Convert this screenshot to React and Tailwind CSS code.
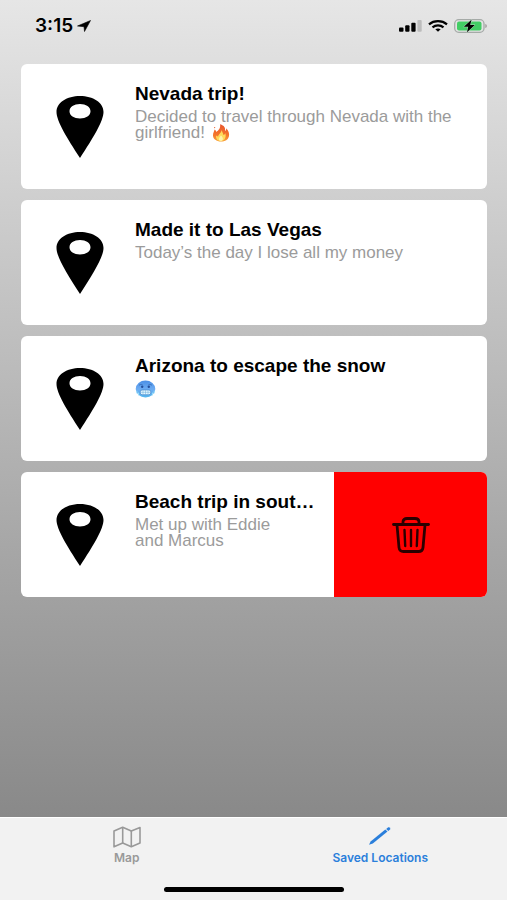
import { useState } from 'react';

const initialTrips = [
  {
    id: 1,
    title: 'Nevada trip!',
    description: 'Decided to travel through Nevada with the girlfriend!',
    emoji: 'fire',
  },
  { id: 2, title: 'Made it to Las Vegas', description: 'Today’s the day I lose all my money' },
  { id: 3, title: 'Arizona to escape the snow', description: '', emoji: 'cold' },
  {
    id: 4,
    title: 'Beach trip in sout…',
    description: 'Met up with Eddie and Marcus',
    swiped: true,
  },
];

function PinIcon() {
  return (
    <svg viewBox="0 0 48 62" className="h-[62px] w-12" aria-hidden="true">
      <path
        fillRule="evenodd"
        d="M24 0C37 0 47.500 6.500 47.500 16C47.500 25 37 42 24 62C11 42 .5 25 .5 16C.5 6.500 11 0 24 0ZM24 8C18 8 13.500 11 13.500 15.300C13.500 19.500 18 22.500 24 22.500C30 22.500 34.500 19.500 34.500 15.300C34.500 11 30 8 24 8Z"
      />
    </svg>
  );
}

function FireEmoji() {
  return (
    <svg viewBox="0 0 18 18" className="-mt-1 ml-0.5 inline-block size-[18px] align-text-bottom" role="img" aria-label="fire">
      <defs>
        <linearGradient id="flame" x1="0" y1="0" x2="0" y2="1">
          <stop offset="0" stopColor="#e8552d" />
          <stop offset="0.6" stopColor="#f4742a" />
          <stop offset="1" stopColor="#f9a13a" />
        </linearGradient>
      </defs>
      <path
        fill="url(#flame)"
        d="M8 .3C12.500 1.500 13.500 4 13 7C14.200 6.500 14.300 5 14.100 4.200C16.500 6.500 17.500 9 17 12C16.300 15.800 13 17.600 9 17.600C4.500 17.600 1 15.200 1 11.300C1 9 2.200 7.500 2.600 5.600C3.600 6.100 4 7 4.200 8C6.500 6.500 8.900 4 8 .3Z"
      />
      <path
        fill="#ffd95a"
        d="M9.500 6C10.500 8 11 9.500 11.500 11C12.600 10.700 13 10 13.100 9C14.700 12.500 13 17 9 17C5.500 17 3.600 14.800 4.200 11.500C5 12.200 5.500 12.500 6.200 12.600C6.300 10 9.500 9.200 9.500 6Z"
      />
      <path fill="#fff3a8" d="M9 11.500C11.500 13.500 11.500 16.700 9 16.900C6.300 16.700 6.300 14.500 9 11.500Z" />
      <circle cx="2.600" cy="3.600" r=".7" fill="#ee6a3a" />
    </svg>
  );
}

function ColdEmoji() {
  return (
    <svg viewBox="0 0 21 18" className="-mt-1 inline-block h-[18px] w-[21px] align-text-bottom" role="img" aria-label="cold face">
      <defs>
        <linearGradient id="cold" x1="0" y1="0" x2="0" y2="1">
          <stop offset="0" stopColor="#4a8fe6" />
          <stop offset="0.5" stopColor="#6cabf2" />
          <stop offset="1" stopColor="#55b7ee" />
        </linearGradient>
      </defs>
      <ellipse cx="10.500" cy="9" rx="9.800" ry="8.500" fill="url(#cold)" />
      <path d="M4 5.300C5 4.400 6.500 4.300 7.500 4.600M13.500 4.600C14.700 4.300 16 4.500 17 5.300" stroke="#3468b5" strokeWidth=".8" fill="none" />
      <ellipse cx="7.200" cy="6.800" rx="1.200" ry="1.300" fill="#244f9b" />
      <ellipse cx="13.800" cy="6.800" rx="1.200" ry="1.300" fill="#244f9b" />
      <rect x="5.300" y="10" width="10.400" height="4.700" rx="1.800" fill="#e4f8ff" stroke="#3c7cc4" strokeWidth=".6" />
      <path d="M5.500 12.300H15.500M8 10.200V14.500M10.500 10.200V14.500M13 10.200V14.500" stroke="#6aa9d9" strokeWidth=".5" />
      <path d="M1.800 11V13M3.500 13V15M17.500 13V15M19.200 11V13" stroke="#9fe2fb" strokeWidth=".9" strokeLinecap="round" />
    </svg>
  );
}

function TrashIcon() {
  return (
    <svg viewBox="0 0 38 36" className="h-9 w-[38px]" fill="none" stroke="#2b0000" strokeWidth="2.800" strokeLinecap="round" strokeLinejoin="round" aria-hidden="true">
      <path d="M1.500 7.500H36.500" />
      <path d="M11 7V4.800C11 2.500 12.500 1.500 15 1.500H23C25.500 1.500 27 2.500 27 4.800V7" />
      <path d="M5 8L7 30.500C7.300 33.300 8.500 34.500 11.500 34.500H26.500C29.500 34.500 30.700 33.300 31 30.500L33 8" />
      <path d="M12.500 13L13.200 29M19 13V29M25.500 13L24.800 29" strokeWidth="2.400" />
    </svg>
  );
}

function MapIcon() {
  return (
    <svg viewBox="0 0 28 22" className="h-[22px] w-7" fill="none" stroke="currentColor" strokeWidth="1.600" strokeLinejoin="round" aria-hidden="true">
      <path d="M1 5L9.700 1.200L18.300 5L27 1.500V17L18.300 20.800L9.700 17L1 20.800Z" />
      <path d="M9.700 1.200V17M18.300 5V20.800" />
    </svg>
  );
}

function PencilIcon() {
  return (
    <svg viewBox="0 0 28 22" className="h-[22px] w-7" aria-hidden="true">
      <path d="M3 18.700L4.600 15.500L19.300 3.600L21.500 5.500L6.800 17.500Z" fill="currentColor" />
      <path d="M20.200 3L22.200 1.300Q24.900 1 24.300 3.300L22.300 4.900Z" fill="currentColor" />
    </svg>
  );
}

function StatusBar() {
  return (
    <header className="flex h-16 items-start justify-between pt-4 pr-[19px] pl-[35px]">
      <div className="flex h-5 items-center gap-1">
        <span className="font-['Inter'] text-[19px] leading-5 font-semibold">3:15</span>
        <svg viewBox="0 0 14 12" className="h-3 w-3.5" aria-hidden="true">
          <path d="M13.500 .5L7.500 11.500L7 6.700L.5 6Z" stroke="#000" strokeWidth=".6" strokeLinejoin="round" />
        </svg>
      </div>
      <div className="flex h-5 items-center gap-1.5">
        <svg viewBox="0 0 23 12" className="h-3 w-[23px]" aria-hidden="true">
          <rect x="0" y="7.500" width="4.500" height="4.300" rx="1" />
          <rect x="6.200" y="5.300" width="4.300" height="6.500" rx="1" />
          <rect x="12.300" y="2.800" width="4.300" height="9" rx="1" />
          <rect x="18.400" y="0" width="4.300" height="11.800" rx="1" fill="#bcbcbc" />
        </svg>
        <svg viewBox="0 0 20 12" className="h-3 w-5" fill="none" stroke="#000" strokeWidth="2.200" aria-hidden="true">
          <path d="M1 4.400C6 .1 14 .1 19 4.400" />
          <path d="M4.500 7.300C7.700 4.600 12.300 4.600 15.500 7.300" />
          <path d="M7.300 9.300C9 8.100 11 8.100 12.700 9.300L10 11.700Z" fill="#000" stroke="none" />
        </svg>
        <svg viewBox="0 0 34 14" className="h-3.5 w-[34px]" aria-hidden="true">
          <rect x=".7" y=".7" width="29.300" height="12.600" rx="4" fill="none" stroke="#a5aaa7" strokeWidth="1.300" />
          <rect x="3" y="2.500" width="24.500" height="9" rx="2" fill="#42cd64" />
          <path d="M31.300 5C33.300 5.500 33.300 8.500 31.300 9Z" fill="#a09a9a" />
          <path d="M17.500 .8L9.800 7.700H14.200L13 13.200L20.800 6H16.200Z" stroke="#b9dcc1" strokeWidth="1" paintOrder="stroke" />
        </svg>
      </div>
    </header>
  );
}

function TripCard({ trip, onDelete }) {
  return (
    <li className="flex min-h-[125px] overflow-hidden rounded-md bg-white">
      <div className="flex min-w-0 flex-1 pl-[35px]">
        <div className="flex shrink-0 items-center">
          <PinIcon />
        </div>
        <div className="min-w-0 flex-1 pt-5 pr-2 pl-[31px]">
          <h2 className="truncate text-[19px] leading-5 font-bold text-black">{trip.title}</h2>
          <p className={trip.swiped ? 'mt-[5px] max-w-40 text-[17px] leading-4 text-[#9b9b9b]' : 'mt-[5px] text-[17px] leading-4 text-[#9b9b9b]'}>
            {trip.description} {trip.emoji === 'fire' && <FireEmoji />}
            {trip.emoji === 'cold' && <ColdEmoji />}
          </p>
        </div>
      </div>
      {trip.swiped && (
        <button
          type="button"
          aria-label="Delete"
          onClick={() => onDelete(trip.id)}
          className="flex w-[153px] shrink-0 items-center justify-center bg-[#ff0000]"
        >
          <TrashIcon />
        </button>
      )}
    </li>
  );
}

export default function App() {
  const [trips, setTrips] = useState(initialTrips);

  const handleDelete = (id) => {
    setTrips(trips.filter((trip) => trip.id !== id));
  };

  return (
    <div className="flex min-h-screen flex-col bg-[#f2f2f2] font-['Liberation_Sans',sans-serif]">
      <div className="flex flex-1 flex-col bg-linear-to-b from-[#e6e6e6] to-[#898989]">
        <StatusBar />
        <main className="flex-1 pr-5 pb-5 pl-[21px]">
          <ul className="flex flex-col gap-[11px]">
            {trips.map((trip) => (
              <TripCard key={trip.id} trip={trip} onDelete={handleDelete} />
            ))}
          </ul>
        </main>
      </div>

      {/* Tab bar */}
      <footer className="border-t border-white">
        <nav className="grid grid-cols-2 pt-2 font-['Inter'] text-[12px] leading-4 font-semibold">
          <a href="#map" className="flex flex-col items-center gap-0.5 text-[#999999]">
            <MapIcon />
            Map
          </a>
          <a href="#saved" aria-current="page" className="flex flex-col items-center gap-0.5 text-[#2b7fdb]">
            <PencilIcon />
            Saved Locations
          </a>
        </nav>
        <div className="mx-auto mt-[21px] mb-2 h-[5px] w-[180px] rounded-full bg-black" />
      </footer>
    </div>
  );
}
